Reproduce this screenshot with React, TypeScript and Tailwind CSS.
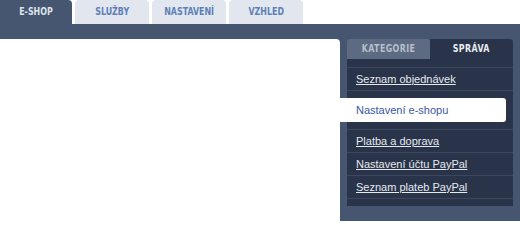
const topTabs = [
  { label: "E-SHOP", active: true },
  { label: "SLUŽBY", active: false },
  { label: "NASTAVENÍ", active: false },
  { label: "VZHLED", active: false },
];

const links = [
  { label: "Seznam objednávek", selected: false },
  { label: "Nastavení e-shopu", selected: true },
  { label: "Platba a doprava", selected: false },
  { label: "Nastavení účtu PayPal", selected: false },
  { label: "Seznam plateb PayPal", selected: false },
];

const tabFont = {
  fontFamily: '"DejaVu Sans Condensed", "DejaVu Sans", sans-serif',
};

export default function App() {
  return (
    <div className="flex h-[221px] w-[520px] flex-col overflow-hidden bg-white">
      {/* top tabs */}
      <div className="flex h-[24px] gap-[3px]">
        {topTabs.map((t, i) => (
          <div
            key={t.label}
            style={tabFont}
            className={
              (i === 0 ? "w-[72px] rounded-tr-[4px] " : "w-[74px] rounded-t-[4px] ") +
              (t.active
                ? "bg-[#465670] text-[#dde2ea]"
                : "bg-[#e2e7ef] text-[#5f7fb6]") +
              " flex items-center justify-center pt-[1px] text-[11px] font-bold"
            }
          >
            <span className="inline-block scale-x-[0.8]">{t.label}</span>
          </div>
        ))}
      </div>

      {/* slate area */}
      <div className="flex flex-1 flex-col bg-[#465670]">
        <div className="h-[15px] shrink-0" />
        <div className="flex flex-1">
          <div className="w-[340px] rounded-tr-[4px] bg-white" />

          <div className="flex w-[180px] flex-col px-[7px]">
            <div className="flex h-[20px] shrink-0" style={tabFont}>
              <div className="flex w-[83px] items-center justify-center rounded-t-[3px] bg-[#5c6a82] text-[11px] font-bold text-[#b7bfcc]">
                <span className="inline-block scale-x-[0.8] tracking-[0.5px]">KATEGORIE</span>
              </div>
              <div className="flex flex-1 items-center justify-center rounded-tr-[3px] bg-[#29344a] text-[11px] font-bold text-[#e9ecf1]">
                <span className="inline-block scale-x-[0.8] tracking-[0.5px]">SPRÁVA</span>
              </div>
            </div>

            <div
              className="flex flex-col bg-[#29344a] pb-[7px] pt-[8px]"
              style={{ fontFamily: '"Liberation Sans", Arial, sans-serif' }}
            >
              {links.map((l) =>
                l.selected ? (
                  <div key={l.label} className="border-t border-[#3c475b] py-[7px]">
                    <div className="-ml-[7px] mr-[7px] flex h-[24px] items-center rounded-r-[3px] bg-white pl-[16px] text-[11px] text-[#3b56a6]">
                      {l.label}
                    </div>
                  </div>
                ) : (
                  <div
                    key={l.label}
                    className="flex h-[23px] items-center border-t border-[#3c475b] pl-[9px] text-[11px] text-[#e6e9ee] underline underline-offset-[1px]"
                  >
                    {l.label}
                  </div>
                )
              )}
              <div className="border-t border-[#3c475b]" />
            </div>
          </div>
        </div>
      </div>
    </div>
  );
}
